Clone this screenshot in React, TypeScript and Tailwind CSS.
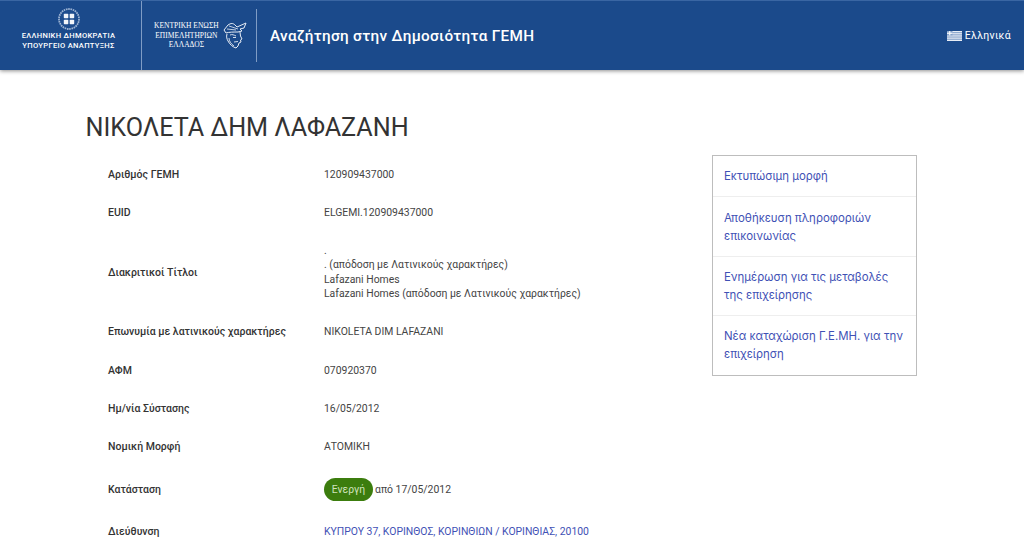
const rows = [
  { label: "Αριθμός ΓΕΜΗ", value: "120909437000" },
  { label: "EUID", value: "ELGEMI.120909437000" },
];

const rowsAfter = [
  { label: "Επωνυμία με λατινικούς χαρακτήρες", value: "NIKOLETA DIM LAFAZANI" },
  { label: "ΑΦΜ", value: "070920370" },
  { label: "Ημ/νία Σύστασης", value: "16/05/2012" },
  { label: "Νομική Μορφή", value: "ΑΤΟΜΙΚΗ" },
];

const actions = [
  ["Εκτυπώσιμη μορφή"],
  ["Αποθήκευση πληροφοριών", "επικοινωνίας"],
  ["Ενημέρωση για τις μεταβολές", "της επιχείρησης"],
  ["Νέα καταχώριση Γ.Ε.ΜΗ. για την", "επιχείρηση"],
];

function Emblem() {
  return (
    <svg width="22" height="22" viewBox="0 0 22 22">
      <circle cx="11" cy="11" r="10" fill="none" stroke="#9db3d3" strokeWidth="1.8" strokeDasharray="1.6 0.7" />
      <circle cx="11" cy="11" r="8.6" fill="#1f4d8e" />
      <rect x="5.8" y="5.8" width="4.5" height="4.5" rx="0.7" fill="#f2f5fa" />
      <rect x="11.7" y="5.8" width="4.5" height="4.5" rx="0.7" fill="#f2f5fa" />
      <rect x="5.8" y="11.7" width="4.5" height="4.5" rx="0.7" fill="#f2f5fa" />
      <rect x="11.7" y="11.7" width="4.5" height="4.5" rx="0.7" fill="#f2f5fa" />
    </svg>
  );
}

function Hermes() {
  return (
    <svg width="24" height="27" viewBox="0 0 24 27" fill="none" stroke="#e6ecf5" strokeWidth="1">
      <path d="M1 8 L5 3 C8 1 10 1 12 3 L14 5 L23 1 L21 6 L17 7 L19 9 L15 10 C11 10 6 10 3 11 Z" />
      <path d="M4 7 L13 8 M6 4 L15 7" strokeWidth="0.8" />
      <path d="M4 12 C3 15 4 17 5 19 C7 23 10 25 13 26 L15 24 L16 21 L18 20 L17.5 18 L19 17 L17.5 14 L17 10" />
      <path d="M7 13 C9 12 11 13 13 14 M10 15.5 L13 15.5 M11 20 L15 19.5 M6 16 C6 19 8 22 11 24" strokeWidth="0.9" />
    </svg>
  );
}

function Flag() {
  return (
    <svg width="15" height="10" viewBox="0 0 15 10">
      <rect width="15" height="10" fill="#e8edf5" />
      <rect y="1.1" width="15" height="1.1" fill="#86a2ca" />
      <rect y="3.3" width="15" height="1.1" fill="#86a2ca" />
      <rect y="5.5" width="15" height="1.1" fill="#86a2ca" />
      <rect y="7.7" width="15" height="1.1" fill="#86a2ca" />
      <rect width="5.5" height="4.4" fill="#86a2ca" />
      <rect x="2.2" width="1.1" height="4.4" fill="#fff" />
      <rect y="1.7" width="5.5" height="1.1" fill="#fff" />
    </svg>
  );
}

function Row({ label, children }: { label: string; children: React.ReactNode }) {
  return (
    <div className="flex items-center py-[12px]">
      <div className="w-[216px] shrink-0 font-medium text-[#333]">{label}</div>
      <div className="text-[10.42px] text-[#444]">{children}</div>
    </div>
  );
}

export default function App() {
  return (
    <div className="h-screen overflow-hidden bg-white font-['Roboto',sans-serif]">
      <header className="flex h-[70px] items-center border-t border-[#3a66a3] bg-[#1b4a8b] text-white shadow-[0_1px_4px_rgba(0,0,0,0.45)]">
        <div className="flex h-full w-[137px] shrink-0 flex-col items-center pt-[7px]">
          <Emblem />
          <div className="mt-[1px] text-center text-[7.6px] leading-[9.5px] font-medium tracking-[0.3px]">
            <div>ΕΛΛΗΝΙΚΗ ΔΗΜΟΚΡΑΤΙΑ</div>
            <div>ΥΠΟΥΡΓΕΙΟ ΑΝΑΠΤΥΞΗΣ</div>
          </div>
        </div>
        <div className="ml-[4px] h-full w-px bg-[#7f9cc5]" />
        <div className="flex h-full w-[114px] shrink-0 items-center gap-[4px] pl-[12px]">
          <div className="text-center font-['Liberation_Serif',serif] text-[7.5px] leading-[9.5px] whitespace-nowrap">
            <div>ΚΕΝΤΡΙΚΗ ΕΝΩΣΗ</div>
            <div>ΕΠΙΜΕΛΗΤΗΡΙΩΝ</div>
            <div>ΕΛΛΑΔΟΣ</div>
          </div>
          <Hermes />
        </div>
        <div className="h-[53px] w-px bg-[#7f9cc5]" />
        <div className="ml-[13px] pt-[1px] text-[15.3px] font-medium tracking-[0.32px]">Αναζήτηση στην Δημοσιότητα ΓΕΜΗ</div>
        <div className="mr-[13px] ml-auto flex items-center gap-[3px] text-[10.5px] tracking-[0.3px]">
          <Flag />
          <span>Ελληνικά</span>
        </div>
      </header>

      <main className="flex pt-[41px]">
        <div className="w-[712px] shrink-0 pl-[85.5px]">
          <h1 className="text-[25.2px] leading-[34px] text-[#333]">ΝΙΚΟΛΕΤΑ ΔΗΜ ΛΑΦΑΖΑΝΗ</h1>
          <div className="mt-[10.5px] pl-[22.5px] text-[10.5px] leading-[14.3px]">
            {rows.map((r) => (
              <Row key={r.label} label={r.label}>{r.value}</Row>
            ))}
            <Row label="Διακριτικοί Τίτλοι">
              <div>.</div>
              <div>. (απόδοση με Λατινικούς χαρακτήρες)</div>
              <div>Lafazani Homes</div>
              <div>Lafazani Homes (απόδοση με Λατινικούς χαρακτήρες)</div>
            </Row>
            {rowsAfter.map((r) => (
              <Row key={r.label} label={r.label}>{r.value}</Row>
            ))}
            <Row label="Κατάσταση">
              <div className="flex items-center gap-[2px]">
                <span className="flex h-[23px] w-[49px] items-center justify-center rounded-full bg-[#3c7d0e] text-[#cfe3bd]">Ενεργή</span>
                <span>από 17/05/2012</span>
              </div>
            </Row>
            <Row label="Διεύθυνση">
              <span className="text-[#3f51b5]">ΚΥΠΡΟΥ 37, ΚΟΡΙΝΘΟΣ, ΚΟΡΙΝΘΙΩΝ / ΚΟΡΙΝΘΙΑΣ, 20100</span>
            </Row>
          </div>
        </div>
        <aside className="mt-[44px] h-fit w-[205px] border border-[#bdbdbd] font-['Inter',sans-serif] text-[11.45px] leading-[18px] text-[#3f51b5]">
          {actions.map((lines, i) => (
            <div key={lines[0]} className={`py-[11.2px] pl-[11px] whitespace-nowrap ${i > 0 ? "border-t border-[#eeeeee]" : ""}`}>
              {lines.map((l) => (
                <div key={l}>{l}</div>
              ))}
            </div>
          ))}
        </aside>
      </main>
    </div>
  );
}
